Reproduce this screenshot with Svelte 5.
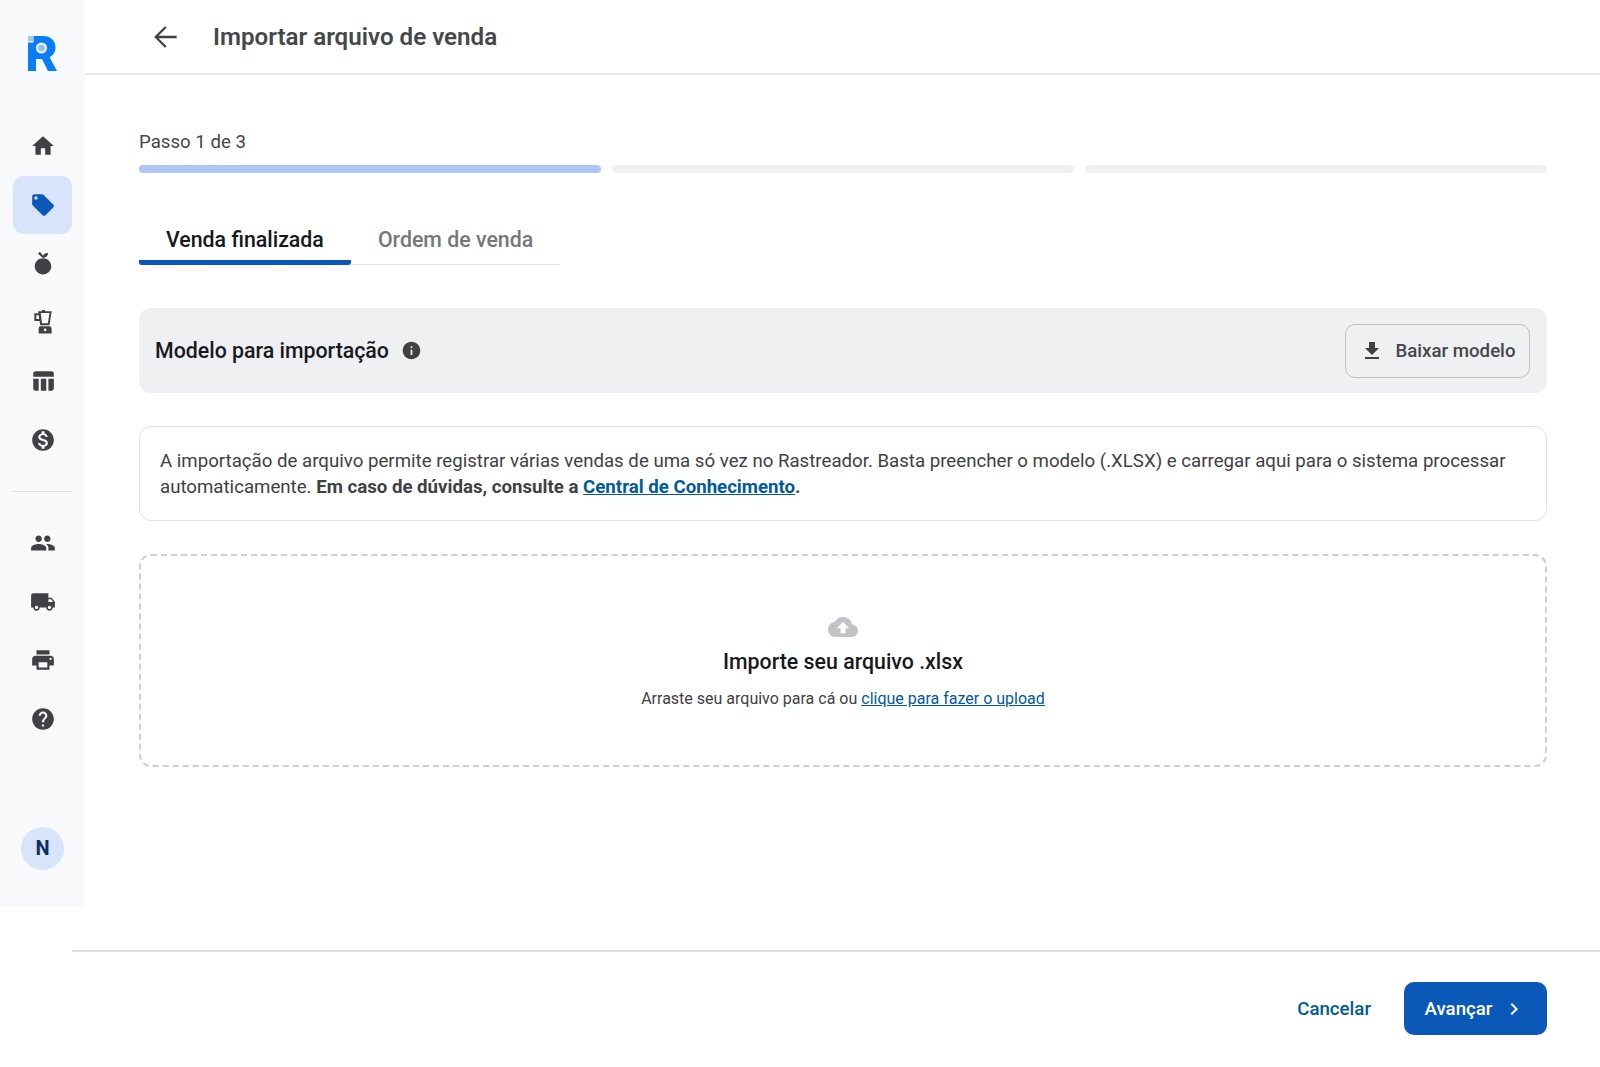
<script>
  const P = {
    home: 'M10 20v-6h4v6h5v-8h3L12 3 2 12h3v8z',
    tag: 'M21.41 11.58l-9-9C12.05 2.22 11.55 2 11 2H4c-1.1 0-2 .9-2 2v7c0 .55.22 1.05.59 1.42l9 9c.36.36.86.58 1.41.58.55 0 1.05-.22 1.41-.59l7-7c.37-.36.59-.86.59-1.41 0-.55-.23-1.06-.59-1.42zM5.5 7C4.67 7 4 6.33 4 5.5S4.67 4 5.5 4 7 4.67 7 5.5 6.33 7 5.5 7z',
    apple: 'M12 6.800c4.200 0 7.600 3.100 7.600 7.300S16.200 21.700 12 21.700 4.400 18.300 4.400 14.100 7.800 6.800 12 6.800zM7.500 2.200 9.200 .8 12 4.400C12.800 2.700 14.500 1.700 16.800 2 16.500 4.200 14.800 6.100 12.100 6.500 11 5.700 9 4.200 7.500 2.200z',
    blender: 'M7.500 2H11V1h3v1h6L18 15H9.500L8.800 11H4V4H7.800zM5.800 5.800V9.200H8.500L8.100 5.800zM9.900 3.800 11.100 13.200H16.500L18 3.800zM9.500 16H18C19.500 16 20 17.500 20 19V22.500H8V19C8 17.500 8.500 16 9.500 16zM14 18.100a1.200 1.200 0 1 0 0 2.400 1.200 1.200 0 0 0 0-2.400z',
    table: 'M10 10.02h5V21h-5zM17 21h3c1.100 0 2-.9 2-2v-9h-5v11zm3-18H5c-1.100 0-2 .9-2 2v3h19V5c0-1.100-.9-2-2-2zM3 19c0 1.100.9 2 2 2h3V10H3v9z',
    money: 'M12 2C6.480 2 2 6.480 2 12s4.480 10 10 10 10-4.480 10-10S17.520 2 12 2zm1.410 16.090V20h-2.670v-1.930c-1.710-.36-3.160-1.460-3.270-3.400h1.960c.1 1.050.82 1.870 2.650 1.870 1.960 0 2.400-.98 2.400-1.590 0-.83-.44-1.610-2.670-2.140-2.480-.6-4.180-1.620-4.180-3.670 0-1.720 1.390-2.840 3.110-3.210V4h2.670v1.950c1.860.45 2.790 1.860 2.870 3.390H14.300c-.05-1.110-.64-1.870-2.220-1.870-1.500 0-2.400.68-2.400 1.640 0 .84.65 1.390 2.670 1.910s4.180 1.390 4.180 3.910c-.01 1.830-1.380 2.830-3.120 3.160z',
    people: 'M16 11c1.660 0 2.990-1.340 2.990-3S17.660 5 16 5c-1.660 0-3 1.340-3 3s1.340 3 3 3zm-8 0c1.660 0 2.990-1.340 2.990-3S9.660 5 8 5C6.340 5 5 6.340 5 8s1.340 3 3 3zm0 2c-2.330 0-7 1.170-7 3.500V19h14v-2.500c0-2.330-4.670-3.500-7-3.500zm8 0c-.29 0-.62.02-.97.05 1.160.84 1.970 1.970 1.970 3.450V19h6v-2.500c0-2.330-4.670-3.500-7-3.500z',
    truck: 'M20 8h-3V4H3c-1.100 0-2 .9-2 2v11h2c0 1.660 1.340 3 3 3s3-1.340 3-3h6c0 1.660 1.340 3 3 3s3-1.340 3-3h2v-5l-3-4zM6 18.500c-.83 0-1.500-.67-1.500-1.500s.67-1.500 1.500-1.500 1.500.67 1.500 1.500-.67 1.500-1.500 1.500zm13.500-9l1.960 2.500H17V9.500h2.500zm-1.500 9c-.83 0-1.500-.67-1.500-1.500s.67-1.500 1.500-1.500 1.500.67 1.500 1.500-.67 1.500-1.500 1.500z',
    print: 'M19 8H5c-1.660 0-3 1.340-3 3v6h4v4h12v-4h4v-6c0-1.660-1.340-3-3-3zm-3 11H8v-5h8v5zm3-7c-.55 0-1-.45-1-1s.45-1 1-1 1 .45 1 1-.45 1-1 1zm-1-9H6v4h12V3z',
    help: 'M12 2C6.480 2 2 6.480 2 12s4.480 10 10 10 10-4.480 10-10S17.520 2 12 2zm1 17h-2v-2h2v2zm2.070-7.750l-.9.92C13.450 12.900 13 13.500 13 15h-2v-.5c0-1.100.45-2.100 1.170-2.830l1.240-1.260c.37-.36.59-.86.59-1.410 0-1.100-.9-2-2-2s-2 .9-2 2H8c0-2.210 1.790-4 4-4s4 1.790 4 4c0 .88-.36 1.680-.93 2.250z'
  };
  const top = [
    { d: P.home }, { d: P.tag, active: true }, { d: P.apple }, { d: P.blender }, { d: P.table }, { d: P.money }
  ];
  const bottom = [{ d: P.people }, { d: P.truck }, { d: P.print }, { d: P.help }];
</script>

<div class="page">
  <div class="upper">
    <aside class="sidebar">
      <svg class="logo" viewBox="0 0 29 35" width="29" height="35" aria-label="Logo">
        <path fill="#0a7cf5" d="M0 6.500H5.500V0H15C22.500 0 27.500 4.500 27.500 11.500 27.500 16 25.300 19.400 21.600 21.200L29 35H20L14 23H8V35H0z" />
        <circle cx="13.500" cy="12" r="5.600" fill="#e9f2fd" />
        <circle cx="13.500" cy="12" r="3.300" fill="#8fc0f3" />
        <rect x="0" y="0" width="5" height="5" fill="#a3c9f3" />
      </svg>
      <nav class="nav">
        {#each top as it}
          <div class="item" class:active={it.active}>
            <svg viewBox="0 0 24 24" width="26" height="26"><path fill-rule="evenodd" d={it.d} /></svg>
          </div>
        {/each}
      </nav>
      <div class="sep"></div>
      <nav class="nav">
        {#each bottom as it}
          <div class="item">
            <svg viewBox="0 0 24 24" width="26" height="26"><path fill-rule="evenodd" d={it.d} /></svg>
          </div>
        {/each}
      </nav>
      <div class="avatar">N</div>
    </aside>

    <main class="main">
      <header class="header">
        <svg class="back" viewBox="0 0 24 24" width="32" height="32"><path d="M20 12H5M11.800 4.500 4.300 12l7.500 7.500" /></svg>
        <h1>Importar arquivo de venda</h1>
      </header>

      <div class="content">
        <div class="step">Passo 1 de 3</div>
        <div class="progress">
          <span class="on"></span><span></span><span></span>
        </div>

        <div class="tabs">
          <div class="tab current">Venda finalizada</div>
          <div class="tab">Ordem de venda</div>
        </div>

        <section class="model">
          <div class="model-title">
            <span>Modelo para importação</span>
            <svg viewBox="0 0 24 24" width="21" height="21"><path d="M12 2C6.480 2 2 6.480 2 12s4.480 10 10 10 10-4.480 10-10S17.520 2 12 2zm1 15h-2v-6h2v6zm0-8h-2V7h2v2z" /></svg>
          </div>
          <button class="download">
            <svg viewBox="0 0 24 24" width="24" height="24"><path d="M19 9h-4V3H9v6H5l7 7 7-7zM5 18v2h14v-2H5z" /></svg>
            Baixar modelo
          </button>
        </section>

        <section class="info">
          A importação de arquivo permite registrar várias vendas de uma só vez no Rastreador. Basta preencher o modelo (.XLSX) e carregar aqui para o sistema processar automaticamente. <b>Em caso de dúvidas, consulte a <a href="#top">Central de Conhecimento</a>.</b>
        </section>

        <section class="drop">
          <svg viewBox="0 0 24 24" width="30" height="30"><path d="M19.350 10.040C18.670 6.590 15.640 4 12 4 9.110 4 6.600 5.640 5.350 8.040 2.340 8.360 0 10.910 0 14c0 3.310 2.690 6 6 6h13c2.760 0 5-2.240 5-5 0-2.640-2.050-4.780-4.650-4.960zM14 13v4h-4v-4H7l5-5 5 5h-3z" /></svg>
          <div class="drop-title">Importe seu arquivo .xlsx</div>
          <div class="drop-sub">Arraste seu arquivo para cá ou <a href="#top">clique para fazer o upload</a></div>
        </section>
      </div>
    </main>
  </div>

  <footer class="footer">
    <button class="cancel">Cancelar</button>
    <button class="next">
      Avançar
      <svg viewBox="0 0 24 24" width="24" height="24"><path d="M10 6L8.590 7.410 13.170 12l-4.580 4.590L10 18l6-6z" /></svg>
    </button>
  </footer>
</div>

<style>
  :global(body) {
    margin: 0;
    background: #fff;
    font-family: Roboto, "Liberation Sans", sans-serif;
  }
  .page {
    width: 1600px;
    height: 1067px;
    overflow: hidden;
    display: flex;
    flex-direction: column;
    color: #3f4144;
  }
  .upper {
    display: flex;
    flex: none;
    height: 907px;
  }
  .sidebar {
    width: 85px;
    flex: none;
    background: #f8f9fb;
    display: flex;
    flex-direction: column;
    align-items: center;
    padding-top: 36px;
    box-sizing: border-box;
  }
  .logo {
    display: block;
    margin-bottom: 46px;
    position: relative;
    left: -0.5px;
  }
  .nav {
    display: flex;
    flex-direction: column;
  }
  .item {
    width: 59px;
    height: 58.700px;
    display: flex;
    align-items: center;
    justify-content: center;
    border-radius: 11px;
    fill: #3f4144;
  }
  .item.active {
    background: #d8e4fb;
    fill: #0a58b8;
  }
  .sep {
    width: 59px;
    height: 1px;
    background: #dfe1e4;
    margin: 21.500px 0 22px;
  }
  .avatar {
    width: 43px;
    height: 43px;
    margin-top: 78.500px;
    border-radius: 50%;
    background: #d8e4fb;
    color: #0b2f66;
    font-weight: 700;
    font-size: 20px;
    display: flex;
    align-items: center;
    justify-content: center;
  }
  .main {
    flex: 1;
    min-width: 0;
  }
  .header {
    height: 73px;
    border-bottom: 2px solid #e6e7e9;
    display: flex;
    align-items: center;
    padding-left: 65px;
    gap: 31px;
  }
  .back {
    fill: none;
    stroke: #3f4144;
    stroke-width: 1.700;
    flex: none;
  }
  h1 {
    margin: 0;
    font-size: 24.150px;
    font-weight: 600;
    color: #45474a;
  }
  .content {
    padding: 55px 53px 0 54px;
  }
  .step {
    font-size: 18.670px;
    line-height: 24px;
    color: #44464a;
  }
  .progress {
    display: flex;
    gap: 11px;
    margin-top: 11px;
  }
  .progress span {
    flex: 1;
    height: 8px;
    border-radius: 4px;
    background: #eff0f2;
  }
  .progress .on {
    background: #adc6f5;
  }
  .tabs {
    display: flex;
    width: 421px;
    margin-top: 38px;
    border-bottom: 1px solid #dfe1e4;
    height: 54px;
    box-sizing: border-box;
  }
  .tab {
    padding: 15px 27px 0;
    font-size: 21.330px;
    font-weight: 500;
    color: #75777a;
    height: 53px;
    box-sizing: border-box;
    line-height: 28px;
    white-space: nowrap;
  }
  .tab.current {
    width: 212px;
    color: #16181b;
    border-bottom: 5px solid #0a58b8;
    border-radius: 0 0 3px 3px;
    height: 54px;
  }
  .model {
    margin-top: 43px;
    height: 85px;
    background: #eff0f2;
    border-radius: 12px;
    display: flex;
    align-items: center;
    justify-content: space-between;
    padding: 0 17px 0 16px;
  }
  .model-title {
    display: flex;
    align-items: center;
    gap: 12px;
    font-size: 21.330px;
    font-weight: 500;
    color: #17191c;
  }
  .model-title svg {
    fill: #3f4144;
  }
  .download {
    height: 54px;
    width: 185px;
    border: 1.500px solid #bfc1c4;
    border-radius: 10px;
    background: transparent;
    font: 500 18.670px Roboto, sans-serif;
    color: #45474b;
    display: flex;
    align-items: center;
    justify-content: center;
    gap: 12px;
    padding: 0;
  }
  .download svg {
    fill: #3f4144;
  }
  .info {
    margin-top: 33px;
    height: 95px;
    box-sizing: border-box;
    border: 1.500px solid #dfe1e4;
    border-radius: 12px;
    padding: 20.500px 20px 0;
    font-size: 18.670px;
    line-height: 26.500px;
    color: #3f4144;
  }
  .info b {
    font-weight: 700;
  }
  .info a {
    color: #005a9c;
  }
  .drop {
    margin-top: 33px;
    height: 213px;
    box-sizing: border-box;
    border: 2px dashed #cdcfd2;
    border-radius: 12px;
    display: flex;
    flex-direction: column;
    align-items: center;
    padding-top: 56px;
  }
  .drop svg {
    fill: #c1c3c7;
  }
  .drop-title {
    font-size: 21.330px;
    font-weight: 500;
    color: #17191c;
    line-height: 28px;
    margin-top: 6px;
  }
  .drop-sub {
    font-size: 16px;
    line-height: 22px;
    margin-top: 12px;
    color: #3f4144;
  }
  .drop-sub a {
    color: #005a9c;
  }
  .footer {
    flex: none;
    box-sizing: border-box;
    margin: 43px 0 0 72px;
    border-top: 2px solid #dcdee0;
    height: 117px;
    display: flex;
    align-items: flex-start;
    justify-content: flex-end;
    gap: 33px;
    padding: 30px 53px 0 0;
  }
  .cancel {
    border: 0;
    background: none;
    padding: 0;
    height: 53px;
    color: #005a9c;
    font: 500 18.670px Roboto, sans-serif;
  }
  .next {
    width: 143px;
    height: 53px;
    border: 0;
    border-radius: 10px;
    background: #0a58b8;
    color: #fff;
    font: 500 18.670px Roboto, sans-serif;
    display: flex;
    align-items: center;
    justify-content: center;
    gap: 10px;
    padding: 0;
  }
  .next svg {
    fill: #fff;
  }
</style>
